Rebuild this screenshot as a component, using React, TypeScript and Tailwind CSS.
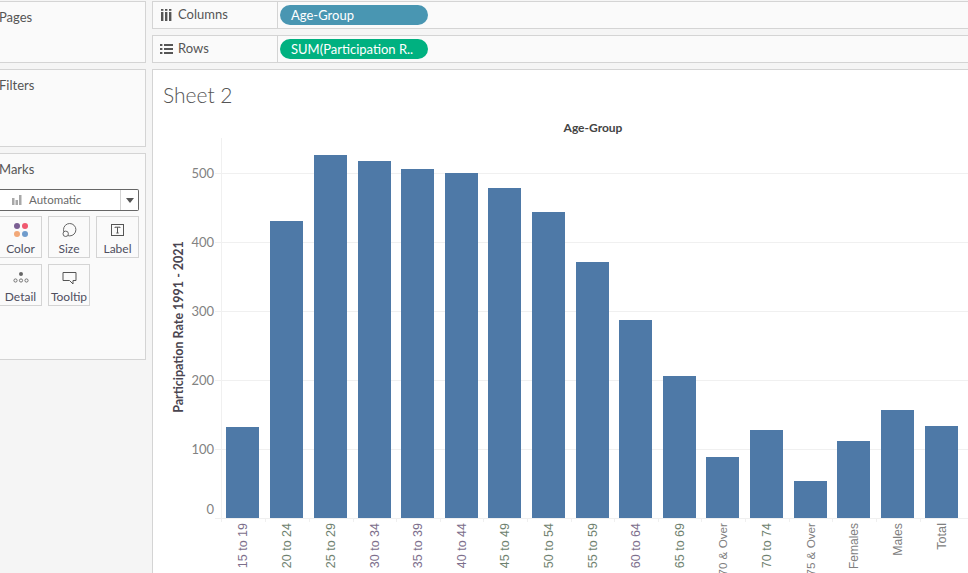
import React from 'react';

const purple = '#7d6f8c';
const green = '#6f826f';
const gray = '#808080';

const bars = [
    { label: '15 to 19', x: 226, top: 427, color: purple, size: 12.5 },
    { label: '20 to 24', x: 270, top: 221, color: green, size: 12.5 },
    { label: '25 to 29', x: 314, top: 155, color: green, size: 12.5 },
    { label: '30 to 34', x: 358, top: 161, color: purple, size: 12.5 },
    { label: '35 to 39', x: 401, top: 169, color: purple, size: 12.5 },
    { label: '40 to 44', x: 445, top: 173, color: purple, size: 12.5 },
    { label: '45 to 49', x: 488, top: 188, color: green, size: 12.5 },
    { label: '50 to 54', x: 532, top: 212, color: green, size: 12.5 },
    { label: '55 to 59', x: 576, top: 262, color: green, size: 12.5 },
    { label: '60 to 64', x: 619, top: 320, color: purple, size: 12.5 },
    { label: '65 to 69', x: 663, top: 376, color: green, size: 12.5 },
    { label: '70 & Over', x: 706, top: 457, color: gray, size: 11.7 },
    { label: '70 to 74', x: 750, top: 430, color: green, size: 12.5 },
    { label: '75 & Over', x: 794, top: 481, color: gray, size: 11.7 },
    { label: 'Females', x: 837, top: 441, color: gray, size: 12 },
    { label: 'Males', x: 881, top: 410, color: gray, size: 12.3 },
    { label: 'Total', x: 925, top: 426, color: gray, size: 12.7 },
];

const ticks = [
    { value: 500, y: 173, labelY: 178 },
    { value: 400, y: 242, labelY: 247 },
    { value: 300, y: 311, labelY: 316 },
    { value: 200, y: 380, labelY: 385 },
    { value: 100, y: 449, labelY: 454 },
    { value: 0, y: 518, labelY: 514 },
];

const MarkCard = ({ label, className, children }: { label: string; className: string; children: React.ReactNode }) => (
    <div className={`h-[42px] border border-[#d4d4d4] flex flex-col items-center justify-between pt-[3px] pb-[1px] text-[12px] leading-[14px] text-[#4f4f5f] ${className}`}>
        <div className="h-[20px] flex items-center justify-center">{children}</div>
        <span>{label}</span>
    </div>
);

const Panel = ({ title, className, children }: { title: string; className: string; children?: React.ReactNode }) => (
    <div className={`border border-l-0 border-[#d4d4d4] bg-[#fafafa] ${className}`}>
        <div className="text-[13px] leading-[15px] text-[#555] pt-[8px] -ml-[1px]">{title}</div>
        {children}
    </div>
);

const Shelf = ({ icon, title, pill, color }: { icon: React.ReactNode; title: string; pill: string; color: string }) => (
    <div className="h-[28px] flex border border-[#d4d4d4] border-r-0 bg-[#fafafa]">
        <div className="w-[125px] flex items-center border-r border-[#d4d4d4]">
            <div className="w-[16px] ml-[5px] flex justify-center">{icon}</div>
            <span className="ml-[4px] text-[13px] text-[#555]">{title}</span>
        </div>
        <div className="flex items-center pl-[2px]">
            <div className={`w-[148px] h-[20px] rounded-full text-white text-[13px] leading-[20px] pl-[11px] ${color}`}>{pill}</div>
        </div>
    </div>
);

const Chart = () => (
    <svg width={968} height={504} viewBox="0 69 968 504" className="absolute left-[-153px] top-[-1px]" style={{ fontFamily: '"Liberation Sans", Arial, sans-serif' }}>
        <line x1={221.5} x2={221.5} y1={138} y2={519} stroke="#f0f0f0" />
        {ticks.map((t) => (
            <line key={t.value} x1={215} x2={968} y1={t.y + 0.5} y2={t.y + 0.5} stroke="#f0f0f0" />
        ))}
        {ticks.map((t) => (
            <text key={t.value} x={214} y={t.labelY} textAnchor="end" fontSize={13} fill="#828282" fontFamily="Lato, sans-serif">{t.value}</text>
        ))}
        {bars.map((b) => (
            <rect key={b.label} x={b.x} y={b.top} width={33} height={518 - b.top} fill="#4e79a7" />
        ))}
        {bars.map((b) => (
            <line key={b.label} x1={b.x - 4.5} x2={b.x - 4.5} y1={518} y2={522} stroke="#f0f0f0" />
        ))}
        {bars.map((b) => (
            <text key={b.label} transform={`translate(${b.x + 21} 523) rotate(-90)`} textAnchor="end" fontSize={b.size} fill={b.color}>{b.label}</text>
        ))}
        <text x={593} y={132} textAnchor="middle" fontSize={12} fontWeight={700} fill="#444" fontFamily="Lato, sans-serif">Age-Group</text>
        <text transform="translate(183 327) rotate(-90)" textAnchor="middle" fontSize={12.5} fontWeight={700} fill="#4a4550" fontFamily="Lato, sans-serif">Participation Rate 1991 - 2021</text>
    </svg>
);

export default function App() {
    return (
        <div className="w-[968px] h-[573px] overflow-hidden bg-[#f5f5f5] flex gap-[6px] pt-[1px]" style={{ fontFamily: 'Lato, sans-serif' }}>
            <div className="w-[146px] flex flex-col gap-[6px] shrink-0">
                <Panel title="Pages" className="h-[62px]" />
                <Panel title="Filters" className="h-[78px]" />
                <Panel title="Marks" className="h-[207px]">
                    <div className="mt-[12px] w-[139px] h-[22px] border border-[#666] border-l-0 rounded-r-[2px] bg-white flex items-center">
                        <div className="flex-1 flex items-center pl-[12px] text-[11.5px] text-[#6a6a6a]">
                            <svg width="10" height="10" viewBox="0 0 10 10" className="mr-[7px]" fill="#a8a8a8">
                                <rect x="0" y="3" width="2.5" height="7" />
                                <rect x="3.5" y="5" width="2.5" height="5" />
                                <rect x="7" y="0" width="2.5" height="10" />
                            </svg>
                            Automatic
                        </div>
                        <div className="w-[18px] h-full border-l border-[#d4d4d4] flex items-center justify-center">
                            <div className="w-0 h-0 border-l-[4px] border-r-[4px] border-t-[5px] border-l-transparent border-r-transparent border-t-[#555]" />
                        </div>
                    </div>
                    <div className="mt-[5px] flex flex-wrap gap-[6px] w-[150px]">
                        <MarkCard label="Color" className="w-[43px] -ml-[1px]">
                            <svg width="16" height="16" viewBox="0 0 16 16">
                                <circle cx="4" cy="4" r="3" fill="#7b5f93" />
                                <circle cx="12" cy="4" r="3" fill="#f0596f" />
                                <circle cx="4" cy="12" r="3" fill="#f2a878" />
                                <circle cx="12" cy="12" r="3" fill="#6f9ccc" />
                            </svg>
                        </MarkCard>
                        <MarkCard label="Size" className="w-[42px]">
                            <svg width="16" height="16" viewBox="0 0 16 16" fill="none" stroke="#666">
                                <circle cx="8.7" cy="7.7" r="6.2" fill="#fafafa" />
                                <circle cx="4.7" cy="11.8" r="2.7" fill="#fafafa" />
                            </svg>
                        </MarkCard>
                        <MarkCard label="Label" className="w-[43px]">
                            <svg width="14" height="14" viewBox="0 0 14 14" fill="none" stroke="#555">
                                <rect x="0.5" y="1.5" width="12" height="11" />
                                <path d="M4 5V4.2H9V5M6.5 4.2V10M5.3 10H7.7" />
                            </svg>
                        </MarkCard>
                        <MarkCard label="Detail" className="w-[43px] -ml-[1px]">
                            <svg width="16" height="16" viewBox="0 0 16 16" fill="none" stroke="#666" strokeWidth="0.9">
                                <circle cx="8" cy="4" r="2" fill="#666" stroke="none" />
                                <circle cx="2.5" cy="10.5" r="1.6" />
                                <circle cx="8" cy="10.5" r="1.6" />
                                <circle cx="13.5" cy="10.5" r="1.6" />
                            </svg>
                        </MarkCard>
                        <MarkCard label="Tooltip" className="w-[42px]">
                            <svg width="15" height="14" viewBox="0 0 15 14" fill="none" stroke="#555">
                                <path d="M1 1.5H14V9.5H11V13L7.5 9.5H1Z" />
                            </svg>
                        </MarkCard>
                    </div>
                </Panel>
            </div>
            <div className="flex-1 flex flex-col gap-[6px]">
                <Shelf
                    title="Columns"
                    pill="Age-Group"
                    color="bg-[#4996b2]"
                    icon={
                        <svg width="11" height="12" viewBox="0 0 11 12" fill="#555">
                            <rect x="0" y="3" width="2.4" height="9" />
                            <rect x="4" y="3" width="2.4" height="9" />
                            <rect x="8" y="3" width="2.4" height="9" />
                            <rect x="0" y="0" width="2.4" height="1.8" />
                            <rect x="4" y="0" width="2.4" height="1.8" />
                            <rect x="8" y="0" width="2.4" height="1.8" />
                        </svg>
                    }
                />
                <Shelf
                    title="Rows"
                    pill="SUM(Participation R.."
                    color="bg-[#00b180]"
                    icon={
                        <svg width="13" height="10" viewBox="0 0 13 10" fill="#555">
                            <rect x="0" y="0" width="2.4" height="2" />
                            <rect x="4" y="0" width="9" height="2" />
                            <rect x="0" y="4" width="2.4" height="2" />
                            <rect x="4" y="4" width="9" height="2" />
                            <rect x="0" y="8" width="2.4" height="2" />
                            <rect x="4" y="8" width="9" height="2" />
                        </svg>
                    }
                />
                <div className="relative flex-1 bg-white border border-[#d4d4d4] border-r-0 border-b-0 overflow-hidden">
                    <div className="relative z-10 pl-[10px] pt-[12px] text-[21px] leading-[26px] font-light text-[#555]">Sheet 2</div>
                    <Chart />
                </div>
            </div>
        </div>
    );
}
